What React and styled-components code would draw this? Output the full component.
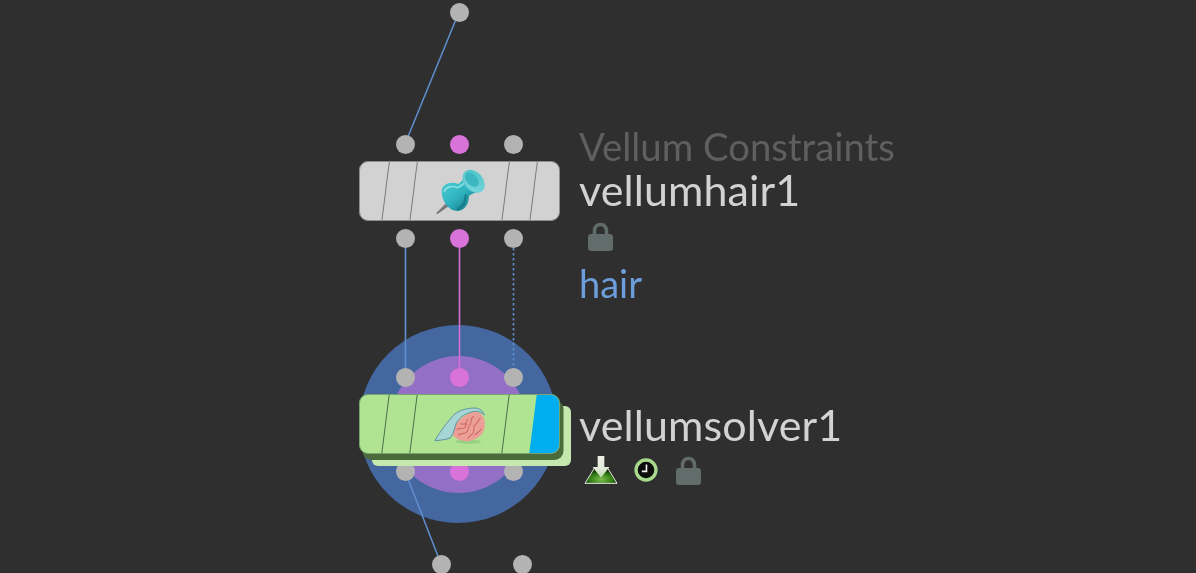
import React from 'react'
import styled, { createGlobalStyle } from 'styled-components'

const GlobalStyle = createGlobalStyle`
    html, body {
        margin: 0;
        padding: 0;
        background: #2f2f2f;
        overflow: hidden;
    }
`

function PinIcon() {
    return (
        <svg width="70" height="60" viewBox="0 0 210 180">
            <defs>
                <linearGradient id="pinBody" x1="0.1" y1="0.1" x2="0.8" y2="0.9">
                    <stop offset="0" stopColor="#4ccbd2" />
                    <stop offset="0.55" stopColor="#2fb3be" />
                    <stop offset="1" stopColor="#187d8c" />
                </linearGradient>
                <linearGradient id="pinHead" x1="0" y1="0" x2="1" y2="1">
                    <stop offset="0" stopColor="#4fc3ca" />
                    <stop offset="1" stopColor="#7ad8dc" />
                </linearGradient>
            </defs>
            <path d="M33 154 L66 121 L75 130 L38 156 Z" fill="#77797c" />
            <path d="M50 88 C50 66 78 56 100 66 C108 60 114 54 118 44 L160 90 C148 92 140 96 132 102 C132 122 122 144 100 147 C76 150 50 122 50 88 Z" fill="url(#pinBody)" />
            <path d="M58 88 C64 74 82 70 97 77 C108 72 116 66 124 58" stroke="#9be8ea" strokeWidth="5" fill="none" strokeLinecap="round" opacity="0.8" />
            <path d="M100 141 C114 133 122 116 122 100" stroke="#13707d" strokeWidth="7" fill="none" strokeLinecap="round" opacity="0.7" />
            <ellipse cx="146" cy="58" rx="39" ry="28" transform="rotate(48 146 58)" fill="url(#pinHead)" />
            <ellipse cx="141" cy="53" rx="25" ry="16" transform="rotate(48 141 53)" fill="#3cb6c0" />
        </svg>
    )
}

function BrainIcon() {
    return (
        <svg width="70" height="50" viewBox="0 0 210 150">
            <ellipse cx="130" cy="128" rx="38" ry="6" fill="#97d07f" />
            <path d="M82 98 C86 72 116 44 150 38 C174 38 184 62 178 90 C172 114 142 129 118 126 C98 123 82 114 82 98 Z" fill="#eb9f97" />
            <path d="M96 92 C104 84 112 92 120 86 C124 76 118 70 128 62 M100 108 C110 100 118 108 126 98 C132 90 128 82 136 76 C140 66 134 60 146 52 M128 118 C134 108 144 110 146 98 C148 88 142 82 152 76 C160 72 158 62 166 58 M150 108 C156 100 164 100 168 90 M108 74 C114 78 120 72 126 76" stroke="#d06d68" strokeWidth="3.4" fill="none" strokeLinecap="round" />
            <path d="M30 125 C40 105 60 78 84 50 C98 36 122 27 150 27 C165 28 174 36 178 48 C170 40 160 36 148 37 C122 42 104 54 94 72 C88 88 86 104 76 117 C62 122 46 124 30 125 Z" fill="#a6d6d6" stroke="#5f94a0" strokeWidth="3" />
        </svg>
    )
}

function LockIcon() {
    return (
        <svg width="29" height="29" viewBox="-2 0 29 29">
            <path d="M6.5 13 V9 C6.5 5 9 2.5 12.5 2.5 C16 2.5 18.5 5 18.5 9 V13" fill="none" stroke="#626c6b" strokeWidth="3.6" />
            <rect x="0" y="12" width="25" height="17" rx="3" fill="#626c6b" />
        </svg>
    )
}

function SceneIcon() {
    return (
        <svg width="34" height="30" viewBox="0 0 102 90">
            <defs>
                <radialGradient id="hill" cx="0.5" cy="0.75" r="0.6">
                    <stop offset="0" stopColor="#7fc04e" />
                    <stop offset="0.6" stopColor="#2f7a14" />
                    <stop offset="1" stopColor="#0f2a08" />
                </radialGradient>
                <linearGradient id="arrow" x1="0" y1="0" x2="0" y2="1">
                    <stop offset="0" stopColor="#eef0e6" />
                    <stop offset="0.6" stopColor="#e2eada" />
                    <stop offset="1" stopColor="#b6d8a0" />
                </linearGradient>
            </defs>
            <path d="M3 85 L33 36 H69 L99 85 Z" fill="url(#hill)" />
            <path d="M3 85 L33 36 M99 85 L69 36 M3 85 H99" stroke="#e6e6e0" strokeWidth="3" fill="none" />
            <path d="M41 3 H61 V36 H76 L51 68 L26 36 H41 Z" fill="url(#arrow)" />
        </svg>
    )
}

function ClockIcon() {
    return (
        <svg width="24" height="24" viewBox="0 0 26 26">
            <circle cx="13" cy="13" r="10.8" fill="#0c0c0c" stroke="#a8d98c" strokeWidth="3.6" />
            <path d="M13.5 7 V14.5 H8.5" fill="none" stroke="#f2f2f2" strokeWidth="1.8" />
        </svg>
    )
}

function Node({ x, y, variant, children }) {
    const solver = variant === 'solver'
    return (
        <NodeGroup $x={x} $y={y}>
            <NodeColumn>
                <Ports>
                    <Port />
                    <Port $pink />
                    <Port />
                </Ports>
                <BodyWrap>
                    {solver && <BackPlate />}
                    <Body $solver={solver}>
                        <Stripe $col={2} $solver={solver} />
                        <Stripe $col={4} $solver={solver} />
                        <IconSlot>{solver ? <BrainIcon /> : <PinIcon />}</IconSlot>
                        <Stripe $col={6} $solver={solver} />
                        {solver ? <Flag /> : <Stripe $col={8} />}
                    </Body>
                </BodyWrap>
                <Ports>
                    <Port />
                    <Port $pink />
                    <Port />
                </Ports>
            </NodeColumn>
            {children}
        </NodeGroup>
    )
}

export default function App() {
    return (
        <Canvas>
            <GlobalStyle />
            <OuterHalo>
                <InnerHalo />
            </OuterHalo>
            <Wires width="1196" height="573" viewBox="0 0 1196 573">
                <line x1="459" y1="12" x2="405" y2="144" stroke="#5f8fd0" strokeWidth="1.5" />
                <line x1="405.5" y1="238" x2="405.5" y2="377" stroke="#5f8fd0" strokeWidth="1.6" />
                <line x1="459.5" y1="238" x2="459.5" y2="377" stroke="#d56fd8" strokeWidth="1.6" />
                <line x1="513.5" y1="238" x2="513.5" y2="377" stroke="#5f8fd0" strokeWidth="1.6" strokeDasharray="2.5 2.5" />
                <line x1="405" y1="471" x2="441" y2="564" stroke="#5f8fd0" strokeWidth="1.5" />
            </Wires>
            <LonePort $x={459} $y={12} />
            <LonePort $x={441} $y={564} />
            <LonePort $x={522} $y={564} />

            <Node x={359} y={134.5} variant="plain">
                <Labels $top={-10}>
                    <TypeName>Vellum Constraints</TypeName>
                    <NodeName>vellumhair1</NodeName>
                    <Badges $height={50} $indent={7}>
                        <LockIcon />
                    </Badges>
                    <Comment>hair</Comment>
                </Labels>
            </Node>
            <Node x={359} y={367.5} variant="solver">
                <Labels $top={35}>
                    <NodeName>vellumsolver1</NodeName>
                    <Badges $height={48} $indent={5}>
                        <SceneIcon />
                        <ClockIcon />
                        <LockIcon />
                    </Badges>
                </Labels>
            </Node>
        </Canvas>
    )
}

const Canvas = styled.div`
    position: relative;
    width: 1196px;
    height: 573px;
    overflow: hidden;
    background: #2f2f2f;
    font-family: "Lato", "Noto Sans", sans-serif;
    filter: blur(0.4px);
`

const OuterHalo = styled.div`
    position: absolute;
    left: 359px;
    top: 325px;
    width: 198px;
    height: 198px;
    border-radius: 50%;
    background: #44679f;
    display: flex;
    align-items: center;
    justify-content: center;
`

const InnerHalo = styled.div`
    width: 137px;
    height: 137px;
    border-radius: 50%;
    background: #936fc6;
`

const Wires = styled.svg`
    position: absolute;
    left: 0;
    top: 0;
`

const LonePort = styled.div`
    position: absolute;
    left: ${p => p.$x - 9.5}px;
    top: ${p => p.$y - 9.5}px;
    width: 19px;
    height: 19px;
    border-radius: 50%;
    background: #b3b3b3;
`

const NodeGroup = styled.div`
    position: absolute;
    left: ${p => p.$x}px;
    top: ${p => p.$y}px;
    display: flex;
    align-items: flex-start;
    gap: 19px;
`

const NodeColumn = styled.div`
    display: flex;
    flex-direction: column;
    gap: 7.5px;
    width: 201px;
`

const Ports = styled.div`
    display: flex;
    justify-content: center;
    gap: 35px;
`

const Port = styled.div`
    width: 19px;
    height: 19px;
    border-radius: 50%;
    background: ${p => (p.$pink ? '#d973da' : '#b3b3b3')};
`

const BodyWrap = styled.div`
    position: relative;
    height: 60px;
`

const BackPlate = styled.div`
    position: absolute;
    left: 12.5px;
    top: 11.5px;
    width: 199px;
    height: 60px;
    border-radius: 6px;
    background: #c4e8ae;
`

const Body = styled.div`
    position: relative;
    height: 60px;
    box-sizing: border-box;
    overflow: hidden;
    border-radius: 9px;
    border: 1.5px solid ${p => (p.$solver ? '#78a26e' : '#8e8e8e')};
    background: ${p => (p.$solver ? '#b0e493' : '#d2d2d2')};
    box-shadow: ${p => (p.$solver ? '3.5px 6px 0 #4b6b3c' : 'none')};
    display: grid;
    grid-template-columns: 25px 1px 27px 1px 91px 1px 27px 1fr;
    grid-template-rows: 1fr;
`

const Stripe = styled.div`
    grid-column: ${p => p.$col};
    grid-row: 1;
    width: 1px;
    margin: -2px 0;
    background: ${p => (p.$solver ? '#4a7048' : '#7a7a7a')};
    transform: skewX(-7.2deg);
`

const Flag = styled.div`
    grid-column: 8;
    grid-row: 1;
    margin: -2px -14px -2px 0;
    background: #00aeef;
    transform: skewX(-7.2deg);
`

const IconSlot = styled.div`
    grid-column: 5;
    grid-row: 1;
    display: flex;
    align-items: center;
    justify-content: center;
`

const Labels = styled.div`
    display: flex;
    flex-direction: column;
    margin-top: ${p => p.$top}px;
    white-space: nowrap;
`

const TypeName = styled.div`
    font-size: 38.3px;
    line-height: 43px;
    color: #5f5f5f;
`

const NodeName = styled.div`
    font-size: 43px;
    line-height: 43.5px;
    letter-spacing: 0.1px;
    color: #d2d2d2;
`

const Badges = styled.div`
    display: flex;
    align-items: center;
    gap: 16px;
    height: ${p => p.$height}px;
    padding-left: ${p => p.$indent}px;
`

const Comment = styled.div`
    font-size: 38px;
    line-height: 44px;
    color: #6d9edb;
`
